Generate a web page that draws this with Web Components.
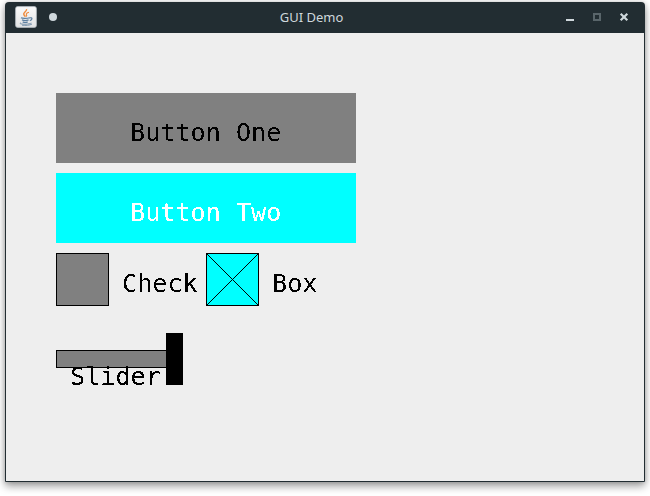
<!DOCTYPE html>
<html lang="en">
<head>
<meta charset="utf-8">
<title>GUI Demo</title>
<style>
html, body { margin: 0; height: 100%; background: #fff; overflow: hidden; }
body { font-family: "Noto Sans", sans-serif; }
</style>
</head>
<body>
<demo-window heading="GUI Demo">
  <demo-button>Button One</demo-button>
  <demo-button active>Button Two</demo-button>
  <demo-row>
    <demo-check>Check</demo-check>
    <demo-check checked>Box</demo-check>
  </demo-row>
  <demo-slider>Slider</demo-slider>
</demo-window>
<script>
const mono = `
  .label { font: 25.2px/30px "DejaVu Sans Mono", monospace; letter-spacing: -0.03px; white-space: pre; filter: url(#crisp); }
  .defs { position: absolute; width: 0; height: 0; }
`;
const crisp = `<svg class="defs" aria-hidden="true"><filter id="crisp" x="-5%" y="-5%" width="110%" height="110%" color-interpolation-filters="sRGB"><feComponentTransfer><feFuncA type="discrete" tableValues="0 1"/></feComponentTransfer></filter></svg>`;

function define(name, html) {
  customElements.define(name, class extends HTMLElement {
    connectedCallback() {
      if (this.shadowRoot) return;
      const t = document.createElement('template');
      t.innerHTML = typeof html === 'function' ? html(this) : html;
      this.attachShadow({ mode: 'open' }).append(t.content.cloneNode(true));
    }
  });
}

define('demo-icon', `
  <style>:host { display: block; width: 22px; height: 22px; } svg { display: block; }</style>
  <svg width="22" height="22" viewBox="0 0 22 22" fill="none">
    <defs><linearGradient id="g" x1="0" y1="0" x2="0" y2="1"><stop stop-color="#fafafa"/><stop offset="1" stop-color="#e2e3e4"/></linearGradient></defs>
    <rect x=".6" y=".6" width="20.8" height="20.8" rx="2" fill="url(#g)" stroke="#b5bdc3" stroke-width=".8"/>
    <path d="M11.5 3.2c1 2-3.8 3.2-2.7 5.4.3.8 1.2 1.4 1.6 2" stroke="#ef8b3c" stroke-width="1.5"/>
    <path d="M14 6.2c-2 .7-3.3 1.5-2.5 2.6.5.8.2 1.4-.4 1.9" stroke="#ef8b3c" stroke-width="1.1"/>
    <path d="M6 11.7c1 .8 6.5.8 8.6 0M7 13.9c1.5.7 5 .7 6.6 0M7.7 15.9c1.3.6 3.8.6 5 0M14.7 11.9c3-.9 2.9 2 .1 2.7" stroke="#5c7fa0" stroke-width="1.2"/>
    <path d="M6 16.7c-4.2 1.6 7.5 2.3 10.3.3M7 19.2c3.5.4 8 .2 10-1.2" stroke="#7892aa" stroke-width="1"/>
  </svg>`);

define('demo-controls', `
  <style>:host { display: block; width: 64px; height: 13px; } svg { display: block; }</style>
  <svg width="64" height="13" viewBox="0 0 64 13" fill="none">
    <path d="M0 8h8v2H0z" fill="#cfd8dc"/>
    <path d="M28 3h6v6h-6z" stroke="#59656a" stroke-width="2"/>
    <path d="M54.7 2.7l6.600 6.600M61.300 2.700l-6.600 6.600" stroke="#cfd8dc" stroke-width="2.200"/>
  </svg>`);

define('demo-window', el => `
  <style>
    :host { display: flex; flex-direction: column; box-sizing: border-box; width: 640px; height: 480px; margin: 2px 5px 0;
      background: #222d32; border-radius: 4px 4px 1px 1px; box-shadow: 0 4px 8px rgba(0,0,0,.4), 0 0 4px rgba(0,0,0,.15); }
    header { display: grid; grid-template-columns: 64px 1fr 64px; align-items: center; height: 31px; padding: 0 15px 0 10px; box-sizing: border-box; }
    .left { display: flex; align-items: center; gap: 12px; padding-bottom: 1px; }
    .dot { flex: none; width: 8px; height: 8px; border-radius: 50%; background: #cfd8dc; }
    .title { font: 13px/18px "Noto Sans", sans-serif; color: #cfd8dc; text-align: center; padding: 0 22px 2px 0; }
    main { flex: 1; display: flex; flex-direction: column; align-items: flex-start; gap: 10px; margin: 0 1px 1px; padding: 60px 50px 0; background: #eee; }
  </style>
  <header><div class="left"><demo-icon></demo-icon><span class="dot"></span></div>
  <div class="title">${el.getAttribute('heading')}</div><demo-controls></demo-controls></header>
  <main><slot></slot></main>`);

define('demo-button', `
  <style>
    :host { display: block; box-sizing: border-box; width: 300px; height: 70px; padding: 25px 0 0 74px; background: #808080; color: #000; }
    :host([active]) { background: #0ff; color: #fff; }
    ${mono}
  </style>${crisp}<div class="label"><slot></slot></div>`);

define('demo-row', `<style>:host { display: flex; }</style><slot></slot>`);

define('demo-check', el => `
  <style>
    :host { display: flex; width: 150px; height: 53px; color: #000; }
    .box { display: block; flex: none; }
    .label { padding: 16px 0 0 13px; }
    ${mono}
  </style>${crisp}
  <svg class="box" width="53" height="53" shape-rendering="crispEdges"><rect x=".5" y=".5" width="52" height="52" fill="${el.hasAttribute('checked') ? '#0ff' : '#808080'}" stroke="#000"/>
  ${el.hasAttribute('checked') ? '<path d="M.5 .5L52.5 52.5M52.5 .5L.5 52.5" stroke="#000"/>' : ''}</svg>
  <div class="label"><slot></slot></div>`);

define('demo-slider', `
  <style>
    :host { display: grid; width: 127px; height: 52px; margin-top: 17px; color: #000; }
    .track, .thumb, .label { grid-area: 1 / 1; }
    .track { align-self: start; box-sizing: border-box; width: 112px; height: 18px; margin-top: 17px; background: #808080; border: 1px solid #000; }
    .thumb { justify-self: end; width: 17px; height: 52px; background: #000; }
    .label { margin: 29px 0 -7px 14px; }
    ${mono}
  </style>${crisp}
  <div class="track"></div><div class="thumb"></div><div class="label"><slot></slot></div>`);
</script>
</body>
</html>
